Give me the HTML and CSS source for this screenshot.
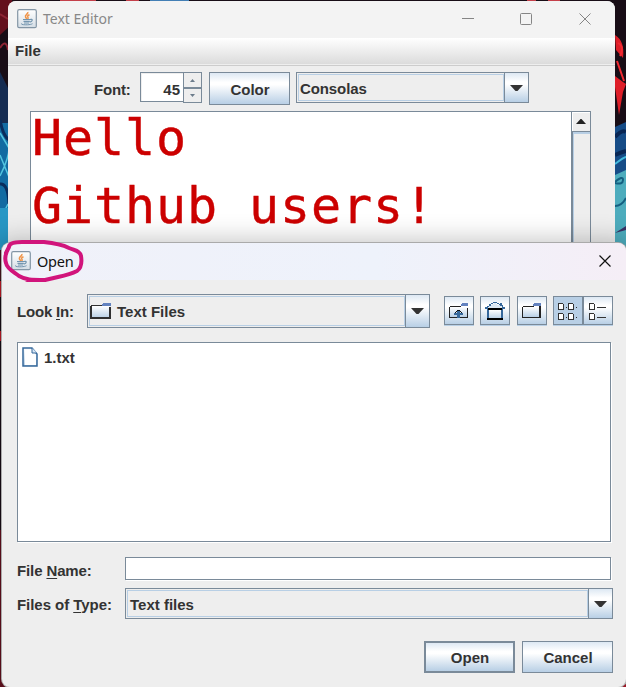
FILE: index.html
```html
<!DOCTYPE html>
<html lang="en">
<head>
<meta charset="utf-8">
<title>Text Editor</title>
<link rel="stylesheet" href="styles.css">
</head>
<body>
<svg width="0" height="0" class="defs">
  <defs>
    <linearGradient id="tile" x2="0" y2="1"><stop stop-color="#fff"/><stop offset="1" stop-color="#d4dde5"/></linearGradient>
    <linearGradient id="fold" x2="0" y2="1"><stop stop-color="#fff"/><stop offset="1" stop-color="#b8cfe5"/></linearGradient>
    <symbol id="java" viewBox="0 0 20 20">
      <rect x=".7" y=".7" width="18.6" height="18" rx="1.5" fill="url(#tile)" stroke="#8395a5" stroke-width="1.2"/>
      <path d="M10.8 3c.8 2-3.6 3-2.2 5.2L10 10M12.5 5.7c-2.3 1-2.2 1.700-1.500 2.700.4.600.1 1-.3 1.500" fill="none" stroke="#f0954a" stroke-width="1.500"/>
      <path d="M6 10.500h7.500M6.500 12.300h6.200M7 14h5M13 10.500c3-1 3 2-.3 2.600" fill="none" stroke="#7395af" stroke-width="1.200"/>
      <path d="M4.500 14.500c-1.500 1.500 8 1.900 11 .2" fill="none" stroke="#7395af"/>
    </symbol>
  </defs>
</svg>
<main class="desktop">
  <svg class="wallpaper" viewBox="0 0 626 687">
    <rect width="626" height="687" fill="#180d16"/>
    <path d="M0 0h12v24L0 35z" fill="#64101d"/>
    <path d="M60 0h36v2H60zM126 0h13v2h-13zM527 0h9v2h-9zM548 0h12v2h-12z" fill="#c4404a"/>
    <path d="M150 0h39v2h-39z" fill="#437fb5"/>
    <path d="M0 14l8 5M0 48q6-10 8 2" stroke="#8d2434" stroke-width="2" fill="none"/>
    <path d="M0 72l8 16v35H0z" fill="#152c51"/>
    <path d="M0 123h9v129H0z" fill="#126ba2"/>
    <path d="M0 133l9 15M0 176q9-18 9-28M0 155l9 22M0 220l9-18" stroke="#52c4df" stroke-width="1.500" fill="none"/>
    <path d="M0 184q8-1 9 20M0 120q3 16 9 20" stroke="#092c5c" stroke-width="3" fill="none"/>
    <path d="M0 208h8v43H0z" fill="#2797c5"/>
    <path d="M0 250h3v30H0z" fill="#471521"/>
    <path d="M0 281h2v16H0zM0 331h2v10H0z" fill="#c21b27"/>
    <path d="M0 530h9v157H0z" fill="#65101e"/>
    <path d="M615 35q10 6 8 23l-7-8zM615 76l8 6 3 2-3 8-4 23-4-28z" fill="#de1e28"/>
    <path d="M618 43q7 4 2 13M617 61l7 20" stroke="#f12a32" stroke-width="2" fill="none"/>
    <path d="M615 127l11-5v62h-11z" fill="#164c87"/>
    <path d="M615 137q7-8 11-5M615 155q7-3 11-4" stroke="#092654" stroke-width="4" fill="none"/>
    <path d="M615 164q9-7 11-7" stroke="#42b9dc" stroke-width="2" fill="none"/>
    <path d="M615 175l11-5v90h-11z" fill="#4dacbd"/>
    <path d="M615 182q8-7 8-2t-8 3M615 206q7 0 11-8" stroke="#145f80" stroke-width="2" fill="none"/>
    <path d="M615 233l11-7v4z" fill="#3a3265"/>
    <path d="M610 675h16v12h-16z" fill="#b51b2b"/>
  </svg>

  <section class="window editor">
    <header class="titlebar">
      <svg class="app-icon"><use href="#java"/></svg>
      <span class="title">Text Editor</span>
      <svg class="controls" viewBox="0 0 132 16" fill="none" stroke="#858585"><path d="M2 7.500h12M119.500 2.500l11 11M130.500 2.500l-11 11"/><rect x="60.500" y="2.500" width="11" height="11" rx="1"/></svg>
    </header>
    <nav class="menubar">File</nav>
    <div class="tools">
      <span class="font-label">Font:</span>
      <div class="spinner"><span class="number">45</span><div class="steps"><i><svg viewBox="0 0 5 3"><path d="M0 3L2.500 0 5 3z"/></svg></i><i><svg viewBox="0 0 5 3"><path d="M0 0l2.500 3L5 0z"/></svg></i></div></div>
      <button class="button color">Color</button>
      <div class="combo fonts"><span class="value">Consolas</span><span class="drop"><svg viewBox="0 0 13 6"><path d="M0 0h13L7.500 6h-2z"/></svg></span></div>
    </div>
    <div class="document">
      <div class="text">Hello<br>Github users!</div>
      <div class="scroll"><div class="scroll-up"><svg viewBox="0 0 10 5"><path d="M0 5L4.500 0h1L10 5z"/></svg></div><div class="thumb"></div></div>
    </div>
  </section>

  <section class="window dialog">
    <header class="titlebar">
      <svg class="app-icon"><use href="#java"/></svg>
      <span class="title">Open</span>
      <svg class="close" viewBox="0 0 12 12"><path d="M.5.5l11 11M11.500.5l-11 11" stroke="#111" stroke-width="1.200"/></svg>
    </header>
    <div class="look-row">
      <label>Look <u>I</u>n:</label>
      <div class="combo folder">
        <span class="value"><svg class="folder-icon" viewBox="0 0 22 18" shape-rendering="crispEdges"><path d="M1 4h19v12H1z" fill="url(#fold)"/><path d="M1 3h12v1H1zM0 4h2v13H0zM0 15h21v2H0zM19 5h2v12h-2z" fill="#303030"/><path d="M13 1h8v3h-9z" fill="#6382bf"/></svg>Text Files</span>
        <span class="drop"><svg viewBox="0 0 13 6"><path d="M0 0h13L7.500 6h-2z"/></svg></span>
      </div>
      <div class="actions">
        <button class="icon-button"><svg viewBox="0 0 20 18" shape-rendering="crispEdges"><path d="M1 5h18v10H1z" fill="url(#fold)"/><path d="M1 4h11v1H1zM0 5h1v11H0zM1 15h18v1H1zM18 6h1v9h-1z" fill="#222"/><path d="M13 1h6v3h-7z" fill="#6382bf"/><path d="M8 9h3v7H8zM5 11h9v2H5z" fill="#36689b"/><path d="M8 8h3v1H8zM7 9h1v1H7zM11 9h1v1h-1zM6 10h1v1H6zM12 10h1v1h-1z" fill="#111"/></svg></button>
        <button class="icon-button"><svg viewBox="0 0 22 20" shape-rendering="crispEdges"><path d="M1 8h20L16 4h-2l-3-2-4 2z" fill="#dce8f3"/><path d="M4 9h14v9H4z" fill="url(#fold)"/><path d="M9 1h4v1H9zM7 2h2v1H7zM13 2h2v1h-2zM5 3h2v2H5zM15 3h1v1h-1zM16 2h2v3h-2zM3 5h2v1H3zM18 4h1v2h-1zM1 6h3v2H1zM18 6h3v2h-3zM3 8h2v10H3zM17 8h2v10h-2z" fill="#36689b"/><path d="M4 7h14v2H4zM3 17h16v2H3z" fill="#000"/></svg></button>
        <button class="icon-button new"><svg viewBox="0 0 20 18" shape-rendering="crispEdges"><path d="M1 5h18v10H1z" fill="url(#fold)"/><path d="M1 4h11v1H1zM0 5h1v11H0zM1 15h18v1H1zM17 4h2v12h-2z" fill="#222"/><path d="M12 1h7v3h-8z" fill="#6382bf"/></svg></button>
        <div class="views">
          <button class="icon-button selected"><svg viewBox="0 0 20 18" shape-rendering="crispEdges" fill="#fff" stroke="#333"><path d="M.5 1.500h4l1 1v5h-5zM10.500 1.500h4l1 1v5h-5zM.5 11.500h4l1 1v5h-5zM10.500 11.500h4l1 1v5h-5z"/><path d="M8 5.500h1M18 5.500h1M8 15.500h1M18 15.500h1"/></svg></button>
          <button class="icon-button list-view"><svg viewBox="0 0 20 18" shape-rendering="crispEdges" fill="#fff" stroke="#333"><path d="M1.500 1.500h4l1 1v5h-5zM1.500 11.500h4l1 1v5h-5z"/><path d="M9 5.500h9M9 15.500h9"/></svg></button>
        </div>
      </div>
    </div>
    <div class="file-list"><div class="file"><svg viewBox="0 0 16 20"><path d="M1 1h9l5 6v12H1z" fill="url(#fold)" stroke="#36689b" stroke-width="1.500"/><path d="M3 3h7l4 5v10H3z" fill="#fff"/><path d="M10 1v5h5" fill="#d6e6f6" stroke="#36689b"/></svg>1.txt</div></div>
    <div class="field name"><label>File <u>N</u>ame:</label><input type="text" aria-label="File Name"></div>
    <div class="field type"><label>Files of <u>T</u>ype:</label><div class="combo"><span class="value">Text files</span><span class="drop"><svg viewBox="0 0 13 6"><path d="M0 0h13L7.500 6h-2z"/></svg></span></div></div>
    <div class="buttons"><button class="button default">Open</button><button class="button">Cancel</button></div>
  </section>
  <svg class="annotation" viewBox="0 0 90 50"><path d="M9 8C6 13 4 18 6 24c1 6 8 9 13 13 7 4 12 4 26 4l13-3c9-2 15-4 19-6 4-3 5-9 4-15-1-5-5-5-12-8C61 5 54 4 44 3H22C13 3 9 5 9 8L6 14M27 41h17" fill="none" stroke="#d1147c" stroke-width="4" stroke-linecap="round" stroke-linejoin="round"/></svg>
</main>
</body>
</html>
```
FILE: styles.css
```css
* { box-sizing: border-box; }
body { margin: 0; font: bold 15px/18px "Liberation Sans", Arial, sans-serif; color: #333; }
button, input { font: inherit; color: inherit; margin: 0; padding: 0; }
.defs { position: absolute; }
.desktop { position: relative; width: 626px; height: 687px; overflow: hidden; }
.wallpaper { display: block; width: 626px; height: 687px; }
.window { position: absolute; background: #eee; overflow: hidden; }
.editor { left: 8px; top: 1px; width: 607px; height: 300px; border-radius: 8px 8px 0 0; }
.dialog { left: 2px; top: 243px; width: 624px; height: 444px; border-radius: 8px; box-shadow: 0 0 0 1px #aaa, 0 4px 26px 7px rgba(0,0,0,.24); }
.titlebar { height: 37px; display: flex; align-items: center; background: #f3f3f3; padding-left: 9px; font: 15px/20px "Noto Sans", sans-serif; color: #888; }
.app-icon { width: 20px; height: 20px; flex: none; margin-top: -1px; }
.title { position: relative; top: -1px; }
.editor .title { margin-left: 6px; font-size: 14px; }
.controls { width: 132px; height: 16px; margin-left: auto; margin-right: 23px; margin-top: -1px; }
.dialog .titlebar { color: #111; background: linear-gradient(90deg, #f0f1f9, #eef2fb 60%, #f5eef6); }
.dialog .title { margin-left: 6px; font-size: 14.500px; letter-spacing: -.2px; }
.close { width: 12px; height: 12px; margin-left: auto; margin-right: 15px; margin-top: -1px; }
.menubar { height: 28px; padding: 4px 7px; background: linear-gradient(#fff, #dadada); border-bottom: 1px solid #ccc; box-shadow: inset 0 -1px #eee; }
.tools { display: flex; align-items: flex-start; height: 45px; padding: 6px 0 0 86px; }
.font-label { margin-top: 9px; width: 46px; letter-spacing: -.2px; }
.spinner { display: flex; width: 62px; height: 30px; }
.number { width: 43px; height: 30px; padding: 8px 3px 0 0; text-align: right; border: solid #7a8a99; border-width: 1px 0 1px 1px; background: #fff; box-shadow: inset 1px 1px #eee; }
.steps { width: 19px; }
.steps i { display: flex; height: 16px; align-items: center; justify-content: center; border: 1px solid #7a8a99; }
.steps i + i { height: 15px; }
.steps svg { width: 5px; height: 3px; fill: #6c7c8b; }
.button, .icon-button, .drop { border: 1px solid #7a8a99; background: linear-gradient(#dde8f3 0%, #fff 30%, #fff 38%, #b8cfe5 100%); }
.button { width: 91px; height: 32px; border-radius: 0; padding: 2px 0 0 1px; }
.button.color { margin-left: 7px; width: 81px; height: 33px; padding-top: 3px; }
.combo { display: flex; height: 31px; border: 1px solid #7a8a99; }
.value { flex: 1; display: flex; align-items: center; box-shadow: inset 0 0 0 1px #eee, inset 0 0 0 2px #b8cfe5; padding-left: 4px; }
.drop { width: 25px; margin: -1px; display: flex; align-items: center; justify-content: center; }
.drop svg { width: 13px; height: 6px; fill: #333; }
.fonts { margin-left: 6px; width: 233px; }
.fonts .value { padding: 2px 0 0 3px; letter-spacing: -.1px; }
.document { margin-left: 22px; width: 561px; height: 188px; display: flex; border: 1px solid #7a8a99; background: #fff; }
.text { flex: 1; padding-left: 1px; color: #c00; font: 50px/68px "DejaVu Sans Mono", monospace; letter-spacing: .9px; margin-top: -8px; white-space: nowrap; -webkit-text-stroke: .4px #c00; }
.scroll { width: 19px; border-left: 1px solid #7a8a99; background: #eee; }
.scroll-up { height: 19px; display: flex; align-items: center; justify-content: center; box-shadow: inset 1px 1px #fff; }
.scroll-up svg { width: 10px; height: 5px; fill: #222; }
.thumb { height: 165px; border: solid #7a8a99; border-width: 1px 0 0 1px; box-shadow: inset 1px 2px #b8cfe5; }
.look-row { display: flex; margin: 14px 13px 0 15px; height: 34px; align-items: center; }
.look-row label { width: 70px; padding-top: 2px; letter-spacing: -.2px; }
u { text-decoration-thickness: 1px; text-underline-offset: 2px; }
.folder { width: 343px; height: 34px; }
.folder .value { padding-left: 2px; padding-top: 2px; }
.folder-icon { width: 22px; height: 18px; margin-right: 5px; margin-top: -2px; }
.actions { margin-left: auto; display: flex; gap: 6px; margin-top: -1px; }
.icon-button { width: 30px; height: 29px; display: flex; align-items: center; justify-content: center; border-radius: 0; box-shadow: 0 1px #b8cfe5; }
.icon-button svg { width: 20px; height: 18px; }
.icon-button:nth-child(2) svg { width: 22px; height: 20px; }
.new { margin-left: 1px; }
.views { display: flex; }
.selected { background: #b8cfe5; }
.icon-button.list-view svg { width: 20px; height: 18px; }
.file-list { margin: 14px 15px 0; height: 200px; padding: 5px 4px; background: #fff; border: 1px solid #7a8a99; box-shadow: 1px 1px #fff; }
.file { display: flex; align-items: center; height: 20px; gap: 6px; }
.file svg { width: 16px; height: 20px; margin-top: -2px; }
.field { display: flex; margin-left: 15px; }
.field label { width: 108px; letter-spacing: -.12px; }
.name { margin-top: 15px; }
.name label { padding-top: 5px; }
.name input { width: 486px; height: 23px; border: 1px solid #7a8a99; background: #fff; box-shadow: 1px 1px #fff; border-radius: 0; }
.type { margin-top: 8px; }
.type label { padding-top: 8px; letter-spacing: -.05px; }
.type .combo { width: 488px; }
.type .value { padding-top: 2px; }
.buttons { display: flex; justify-content: flex-end; gap: 7px; margin: 22px 13px 0 0; }
.default { border-width: 2px; }
.annotation { position: absolute; left: 0; top: 239px; width: 90px; height: 50px; }
```
